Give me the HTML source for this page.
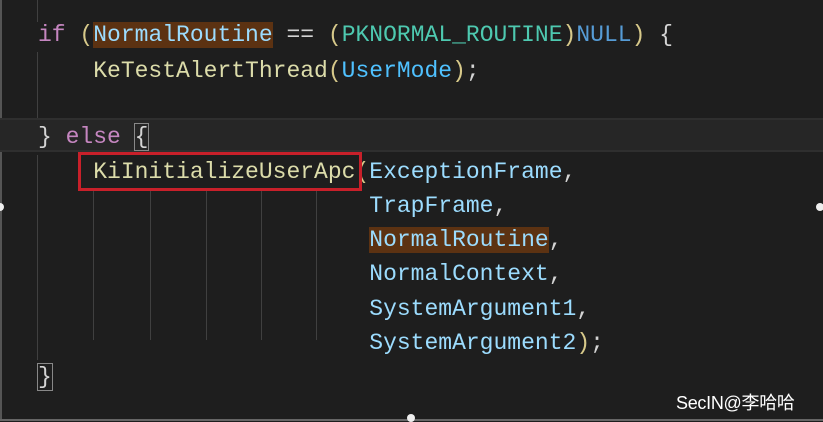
<!DOCTYPE html>
<html><head><meta charset="utf-8"><style>
html,body{margin:0;padding:0}
body{width:823px;height:421px;background:#1e1e1e;position:relative;overflow:hidden;font-family:"Liberation Mono",monospace;font-size:23px;}
.l{position:absolute;left:38px;height:34px;line-height:34px;white-space:pre;color:#d4d4d4}
.k{color:#c586c0}.v{color:#9cdcfe}.h{background:#5c3212}.t{color:#4ec9b0}.n{color:#569cd6}.f{color:#dcdcaa}.p{color:#d7c98a}.c{color:#4fc1ff}
.g{position:absolute;width:1px;background:#404040}
</style></head><body>
<div style="position:absolute;left:0;top:0;width:2px;height:421px;background:#555"></div>
<div style="position:absolute;left:0;top:419px;width:823px;height:2px;background:#666"></div>
<div style="position:absolute;left:0;top:118px;width:823px;height:34px;background:#262626;border-top:2px solid #2f2f2f;border-bottom:2px solid #2f2f2f;box-sizing:border-box"></div>
<div class="g" style="left:37px;top:0;height:22px"></div>
<div class="g" style="left:37px;top:52px;height:66px"></div>
<div class="g" style="left:37px;top:155px;height:205px"></div>
<div class="g" style="left:93px;top:190px;height:150px"></div>
<div class="g" style="left:150px;top:190px;height:150px"></div>
<div class="g" style="left:206px;top:190px;height:150px"></div>
<div class="g" style="left:261px;top:190px;height:150px"></div>
<div class="g" style="left:316px;top:190px;height:150px"></div>
<div class="l" style="top:18px"><span class="k">if</span> <span class="p">(</span><span class="v h">NormalRoutine</span> == <span class="p">(</span><span class="t">PKNORMAL_ROUTINE</span><span class="p">)</span><span class="n">NULL</span><span class="p">)</span> {</div>
<div class="l" style="top:54px">    <span class="f">KeTestAlertThread</span><span class="p">(</span><span class="c">UserMode</span><span class="p">)</span>;</div>
<div class="l" style="top:120px">} <span class="k">else</span> <span style="outline:1px solid #888">{</span></div>
<div class="l" style="top:155px">    <span class="f">KiInitializeUserApc</span><span class="p">(</span><span class="v">ExceptionFrame</span>,</div>
<div class="l" style="top:189px">                        <span class="v">TrapFrame</span>,</div>
<div class="l" style="top:223px">                        <span class="v h">NormalRoutine</span>,</div>
<div class="l" style="top:257px">                        <span class="v">NormalContext</span>,</div>
<div class="l" style="top:292px">                        <span class="v">SystemArgument1</span>,</div>
<div class="l" style="top:326px">                        <span class="v">SystemArgument2</span><span class="p">)</span>;</div>
<div class="l" style="top:360px"><span style="outline:1px solid #888">}</span></div>
<div style="position:absolute;left:78px;top:152px;width:284px;height:39px;border:3px solid #c8202a;box-sizing:border-box"></div>
<div style="position:absolute;left:676px;top:389px;color:#fff;font:18px 'Liberation Sans','Noto Sans CJK SC',sans-serif;letter-spacing:-0.3px">SecIN@李哈哈</div>
<div style="position:absolute;left:-4px;top:203px;width:8px;height:8px;border-radius:50%;background:#eee"></div>
<div style="position:absolute;left:816px;top:203px;width:8px;height:8px;border-radius:50%;background:#eee"></div>
<div style="position:absolute;left:407px;top:414px;width:8px;height:8px;border-radius:50%;background:#eee"></div>
</body></html>
